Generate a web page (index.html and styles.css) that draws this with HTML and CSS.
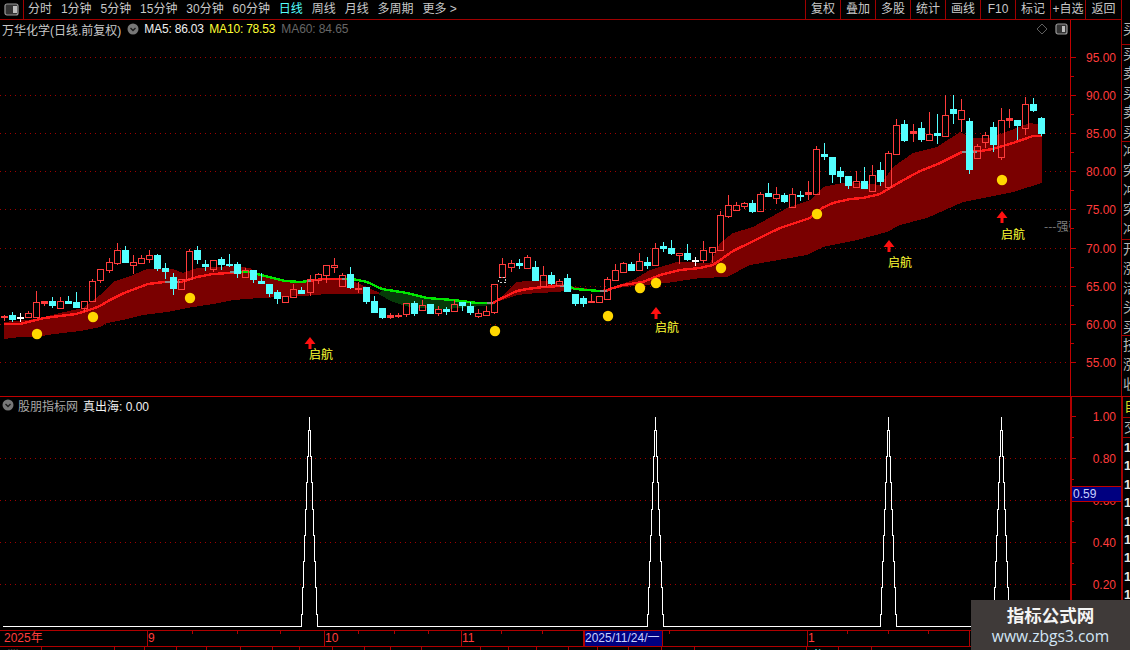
FILE: index.html
```html
<!DOCTYPE html>
<html lang="zh">
<head>
<meta charset="utf-8">
<title>万华化学</title>
<link rel="stylesheet" href="styles.css">
</head>
<body>
<div class="app">
  <header class="toolbar">
    <div class="layout-btn"><svg class="panel-icon" width="16" height="13" viewBox="0 0 16 13"><rect x="1" y="1" width="13" height="11" rx="2" class="pi-frame"/><rect x="9" y="3" width="4" height="7" class="pi-fill"/></svg></div>
    <nav class="periods">
      <span>分时</span><span>1分钟</span><span>5分钟</span><span>15分钟</span><span>30分钟</span><span>60分钟</span><span class="on">日线</span><span>周线</span><span>月线</span><span>多周期</span><span>更多 &gt;</span>
    </nav>
    <nav class="tools">
      <span>复权</span><span>叠加</span><span>多股</span><span>统计</span><span>画线</span><span>F10</span><span>标记</span><span>+自选</span><span>返回</span>
    </nav>
  </header>

  <main class="charts">
    <section class="pane pane-main">
      <div class="plot">
        <svg id="mainPlot" class="canvas" width="1070" height="376" viewBox="0 20 1070 376"></svg>
        <div class="legend legend-main">
          <span class="name">万华化学(日线.前复权)</span>
          <svg class="chev" width="12" height="12" viewBox="0 0 12 12"><circle cx="6" cy="6" r="5.5" class="chev-bg"/><path d="M3.5 5 L6 7.5 L8.5 5" class="chev-mark"/></svg>
          <span class="ma5">MA5: 86.03</span>
          <span class="ma10">MA10: 78.53</span>
          <span class="ma60">MA60: 84.65</span>
        </div>
        <div class="corner">
          <svg width="12" height="12" viewBox="0 0 12 12"><path d="M6 1 L11 6 L6 11 L1 6 Z" class="diamond"/></svg>
          <svg width="13" height="12" viewBox="0 0 13 12"><rect x="1" y="1" width="11" height="10" rx="2" class="pi-frame"/><rect x="7" y="3" width="3" height="6" class="pi-fill"/></svg>
        </div>
      </div>
      <svg id="mainAxis" class="axis" width="51" height="376" viewBox="1070 20 51 376"></svg>
      <div class="strip">
        <div class="group g1">买</div>
        <div class="group g2">买卖买卖买</div>
        <div class="group g3">冲突冲突冲</div>
        <div class="group g4">开涨活头买</div>
        <div class="group g5">技涨收</div>
      </div>
    </section>

    <section class="pane pane-sub">
      <div class="plot">
        <svg id="subPlot" class="canvas" width="1070" height="233" viewBox="0 397 1070 233"></svg>
        <div class="legend legend-sub">
          <svg class="chev" width="12" height="12" viewBox="0 0 12 12"><circle cx="6" cy="6" r="5.5" class="chev-bg"/><path d="M3.5 5 L6 7.5 L8.5 5" class="chev-mark"/></svg>
          <span class="name">股朋指标网</span>
          <span class="val">真出海: 0.00</span>
        </div>
      </div>
      <div class="axis-wrap">
        <svg id="subAxis" class="axis axis-sub" width="49" height="233" viewBox="1072 397 49 233"></svg>
        <div class="cursor-val">0.59</div>
      </div>
      <div class="strip">
        <div class="group g6">自</div>
        <div class="group g7">交</div>
        <div class="digits"><i>1</i><i>1</i><i>1</i><i>1</i><i>1</i><i>1</i><i>1</i><i>1</i><i>1</i><i>1</i></div>
      </div>
    </section>
  </main>

  <div id="dates" class="dates"></div>
  <div id="statusBar" class="status"></div>

  <aside class="watermark">
    <div class="wm-title">指标公式网</div>
    <div class="wm-url">www.zbgs3.com</div>
  </aside>
</div>
<script src="chart.js"></script>
</body>
</html>
```
FILE: styles.css
```css
* { box-sizing: border-box; }
html, body { margin: 0; padding: 0; background: #000; }
body { font-family: "Liberation Sans", "Noto Sans CJK SC", sans-serif; font-size: 12px; color: #c8c8c8; }
.app { position: relative; width: 1130px; height: 650px; overflow: hidden; background: #000; display: flex; flex-direction: column; }

.toolbar { display: flex; height: 20px; width: 1122px; border-bottom: 1px solid #a00000; flex: none; line-height: 19px; }
.layout-btn { width: 24px; border-right: 1px solid #a00000; display: flex; align-items: center; justify-content: center; }
.panel-icon { display: block; }
.pi-frame { fill: #333; stroke: #9a9a9a; stroke-width: 1.2; }
.pi-fill { fill: #bdbdbd; }
.periods { display: flex; gap: 8.9px; padding-left: 4px; flex: 1; white-space: nowrap; }
.periods .on { color: #54ffff; }
.tools { display: flex; }
.tools span { width: 35px; text-align: center; border-left: 1px solid #a00000; white-space: nowrap; }
.tools span:last-child { width: 37px; border-right: 1px solid #a00000; }

.charts { display: flex; flex-direction: column; flex: none; }
.pane { display: flex; width: 1130px; flex: none; }
.pane-main { height: 377px; border-bottom: 1px solid #c00000; }
.pane-sub { height: 233px; }
.plot { position: relative; width: 1070px; flex: none; overflow: hidden; }
.canvas { display: block; }
.axis { display: block; flex: none; }
.axis-wrap { position: relative; width: 51px; flex: none; border-left: 2px solid #b00000; }

.legend { position: absolute; top: 1px; left: 2px; display: flex; align-items: center; height: 16px; white-space: nowrap; }
.legend-main { top: 1px; }
.legend-main .chev { margin-left: 6px; }
.legend-main .ma5 { margin-left: 5px; color: #f0f0f0; width: 65px; letter-spacing: -0.2px; }
.legend-main .ma10 { color: #ffff33; width: 72px; letter-spacing: -0.2px; }
.legend-main .ma60 { color: #666; letter-spacing: -0.1px; }
.legend-sub { top: 0; left: 2px; }
.legend-sub .name { margin-left: 4px; color: #a8a8a8; }
.legend-sub .val { margin-left: 5px; color: #f0f0f0; }
.chev-bg { fill: #777; }
.chev-mark { fill: none; stroke: #1c1c1c; stroke-width: 1.4; }
.corner { position: absolute; top: 3px; right: 2px; display: flex; gap: 7px; align-items: center; }
.diamond { fill: none; stroke: #5e5e5e; }

.strip { width: 9px; flex: none; border-left: 1px solid #a00000; overflow: hidden; font-size: 14px; line-height: 19.4px; color: #b4b4b4; }
.pane-sub .strip { border-left-width: 2px; }
.group { width: 16px; border-bottom: 1px solid #a00000; overflow: hidden; padding-left: 1px; }
.g1 { height: 25px; }
.g2 { height: 97px; }
.g3 { height: 98px; }
.g4 { height: 96px; }
.g5 { height: 61px; border-bottom: 0; }
.g6 { height: 21px; color: #d8d820; }
.g7 { height: 20px; }
.digits { display: flex; flex-direction: column; padding-left: 1px; padding-top: 1px; }
.digits i { font-style: normal; font-weight: bold; font-size: 13px; line-height: 18.4px; color: #e6e6e6; }

.sv-grid { stroke: #a00000; stroke-width: 1; stroke-dasharray: 1 4; }
.band-red { fill: #7a0000; }
.band-green { fill: #063a08; }
.ma-red { fill: none; stroke: #ff1a1a; stroke-width: 2.4; }
.ma-green { fill: none; stroke: #00e600; stroke-width: 2.4; }
.ma-gray { stroke: #8a8a8a; stroke-width: 2; }
.crisp { shape-rendering: crispEdges; }
.candle-h { fill: none; stroke: #ff3c3c; }
.candle-r { fill: #ff3c3c; stroke: #ff3c3c; }
.candle-c { fill: #54ffff; stroke: #54ffff; }
.candle-w { fill: #fff; stroke: #fff; }
.dashed-box { fill: none; stroke: #d0d0d0; stroke-dasharray: 2 2; }
.dot { fill: #ffd700; }
.arrow { fill: #ff1010; }
.tag { fill: #ffff33; font-size: 12px; font-family: "Noto Sans CJK SC", sans-serif; }
.side-tag { fill: #7d7d7d; font-size: 12px; font-family: "Noto Sans CJK SC", sans-serif; }
.spike { fill: none; stroke: #fff; stroke-width: 1; }
.base { stroke: #fff; stroke-width: 1; }
.axis-line { stroke: #c00000; stroke-width: 1; }
.axis-tick { stroke: #c00000; stroke-width: 1; }
.axis-label { fill: #ff3c3c; font-size: 12px; text-anchor: end; font-family: "Liberation Sans", sans-serif; }

.cursor-val { position: absolute; left: 0; top: 89px; width: 49px; height: 16px; padding-left: 1px; background: #000080; border-top: 1px solid #c00000; border-bottom: 1px solid #c00000; color: #c8d0ff; line-height: 14px; }

.dates { position: relative; display: flex; width: 1070px; height: 17px; border-top: 1px solid #b00000; border-bottom: 1px solid #b00000; flex: none; color: #ff3c3c; line-height: 15px; white-space: nowrap; }
.dates .cell { flex: none; border-right: 1px solid #b00000; overflow: hidden; }
.dates .cell.first { padding-left: 4px; }
.dates .cell.cur { background: #000080; color: #c8d0ff; border-left: 1px solid #b00000; }
.dates .tick { position: absolute; top: 0; width: 1px; height: 3px; background: #b00000; }
.status { display: flex; height: 4px; overflow: hidden; flex: none; font-size: 14px; line-height: 18px; color: #e8e8e8; }
.status .cell { flex: none; border-right: 1px solid #b00000; overflow: hidden; white-space: nowrap; padding-left: 6px; }
.status .cyan { color: #54ffff; }

.watermark { position: absolute; left: 971px; top: 600px; width: 159px; height: 50px; background: #3f3a39; text-align: center; }
.wm-title { color: #f4f4f4; font: bold 17.5px/20px "Noto Sans CJK SC", sans-serif; margin-top: 5px; }
.wm-url { color: #d3e6f6; font: 15.6px/18px "Open Sans", sans-serif; margin-top: 2px; }
```
FILE: chart.js
```js
(function () {
var NS = 'http://www.w3.org/2000/svg';
function el(parent, name, attrs, text) {
  var n = document.createElementNS(NS, name);
  for (var k in attrs) n.setAttribute(k, attrs[k]);
  if (text !== undefined) n.textContent = text;
  parent.appendChild(n);
  return n;
}
function pts(a) { return a.map(function (p) { return p[0] + ',' + p[1]; }).join(' '); }

/* body top, body bottom, wick top, wick bottom, kind */
var candles = [
[316,317,315,321,'r'],[315,319,312,322,'c'],[317,318,313,322,'w'],[313,317,311,317,'h'],[302,317,291,317,'h'],[301,303,301,306,'r'],[301,305,297,308,'c'],[301,308,297,308,'h'],[301,303,296,304,'c'],[302,307,292,308,'c'],
[301,308,301,312,'h'],[281,301,279,301,'h'],[269,280,269,283,'h'],[262,270,258,273,'h'],[250,263,243,265,'h'],[250,262,246,262,'c'],[262,265,255,274,'h'],[258,263,255,263,'h'],[255,259,250,263,'h'],[255,268,254,271,'c'],
[268,271,263,279,'c'],[277,288,273,295,'c'],[279,289,279,289,'h'],[251,279,249,280,'h'],[250,259,246,264,'c'],[264,266,260,271,'c'],[260,269,260,272,'h'],[259,264,257,270,'c'],[264,265,254,267,'c'],[264,273,262,278,'c'],
[270,277,268,277,'h'],[270,279,270,283,'c'],[281,283,273,283,'c'],[284,293,284,297,'c'],[292,298,290,304,'c'],[296,302,296,302,'h'],[289,297,284,297,'h'],[290,293,287,294,'c'],[279,292,275,296,'h'],[274,280,273,284,'h'],
[265,275,265,283,'h'],[265,267,258,273,'h'],[275,286,273,286,'h'],[274,287,267,289,'c'],[288,289,282,293,'r'],[287,301,287,304,'c'],[301,312,296,312,'c'],[308,317,308,319,'c'],[315,317,313,319,'r'],[315,316,313,318,'r'],
[303,314,303,317,'h'],[303,313,301,316,'c'],[305,310,300,310,'h'],[304,313,304,313,'c'],[309,313,306,316,'h'],[309,311,307,315,'c'],[304,311,300,311,'h'],[302,305,302,311,'c'],[306,312,302,315,'c'],[313,316,309,318,'h'],
[311,315,306,315,'h'],[284,312,284,314,'h'],[264,277,258,277,'h'],[263,267,260,272,'h'],[263,265,259,269,'c'],[257,268,255,268,'h'],[267,280,261,280,'c'],[275,286,266,286,'h'],[275,283,272,285,'c'],[281,285,279,285,'h'],
[278,291,274,292,'c'],[294,303,294,306,'c'],[298,303,296,307,'c'],[301,302,294,302,'r'],[296,302,296,302,'h'],[279,299,277,299,'h'],[270,280,264,280,'h'],[263,272,262,273,'h'],[264,270,262,271,'c'],[261,270,253,270,'h'],
[262,265,257,269,'c'],[248,265,243,265,'h'],[246,248,242,252,'c'],[248,253,240,255,'c'],[253,255,253,264,'h'],[253,259,244,261,'c'],[260,261,257,266,'w'],[250,260,241,263,'h'],[247,252,247,263,'h'],[215,250,211,250,'h'],
[205,216,195,218,'h'],[205,210,202,210,'h'],[203,206,202,209,'h'],[203,211,200,213,'c'],[194,211,192,211,'h'],[193,196,183,197,'c'],[194,198,187,204,'h'],[195,201,193,203,'c'],[194,207,188,208,'h'],[195,196,191,201,'c'],
[192,194,181,200,'r'],[149,194,146,194,'h'],[154,156,143,160,'c'],[157,174,157,183,'c'],[171,176,167,183,'c'],[176,185,176,189,'c'],[181,187,171,188,'h'],[181,188,167,188,'c'],[175,191,165,192,'h'],[170,181,162,186,'c'],
[153,187,151,190,'h'],[125,154,119,155,'h'],[124,140,120,142,'c'],[131,133,124,142,'r'],[128,139,122,142,'c'],[134,140,112,140,'h'],[133,135,114,144,'c'],[115,136,95,136,'h'],[109,113,95,124,'c'],[110,119,99,132,'h'],
[121,169,118,174,'c'],[146,158,144,159,'h'],[135,142,132,148,'h'],[127,144,122,152,'c'],[120,157,108,160,'h'],[118,120,109,128,'r'],[120,125,120,140,'c'],[104,128,97,135,'h'],[104,110,98,112,'c'],[118,133,117,136,'c']
];

var upper = [[4,322],[36,319],[60,313],[83,308],[100,295],[113,282],[133,275],[147,269],[173,269],[183,273],[197,268],[233,266],[250,268],[262,276],[285,282],[301,283],[327,279],[345,279],[360,284],[380,293],[490,303],[500,298],[517,282],[537,280],[560,283],[575,287],[600,290],[610,288],[633,280],[650,270],[677,262],[710,263],[720,243],[733,233],[753,227],[787,208],[810,200],[823,187],[847,182],[880,185],[893,167],[913,153],[937,147],[960,132],[973,138],[990,138],[1030,123],[1042,125]];
var lower = [[4,339],[20,337],[37,337],[47,335],[63,333],[80,331],[100,327],[107,323],[123,320],[143,315],[167,312],[187,308],[213,304],[233,300],[260,298],[303,296],[327,294],[373,294],[380,294],[490,304],[500,301],[517,295],[537,293],[558,292],[575,289],[600,292],[610,289],[633,286],[667,283],[700,278],[727,277],[750,265],[807,255],[823,247],[857,240],[887,232],[900,225],[927,218],[963,202],[1013,192],[1042,183]];
var greenBand = [[382,290],[407,294],[427,298],[453,301],[477,304],[493,304],[493,305],[447,309],[413,308],[393,302],[378,294]];

var redLines = [
  [[4,324],[20,324],[28,322],[44,318],[60,316],[76,314],[92,309],[100,306],[108,301],[124,293],[140,287],[148,284],[164,282],[181,282],[197,277],[213,274],[229,273],[240,272]],
  [[306,281],[325,279],[346,279]],
  [[493,303],[500,299],[517,291],[527,289],[543,287],[560,286],[566,286]],
  [[606,291],[610,289],[623,285],[643,282],[660,275],[680,270],[700,268],[713,265],[733,251],[780,228],[810,218],[822,208],[833,203],[850,199],[863,198],[880,194],[900,182],[920,171],[938,164],[962,152],[980,151],[993,149],[1013,143],[1033,136],[1042,136]]
];
var greenLines = [
  [[238,272],[250,272],[261,275],[285,281],[301,282],[308,281]],
  [[344,279],[353,279],[367,282],[382,289],[407,293],[427,298],[453,300],[477,303],[492,303]],
  [[564,286],[570,287],[575,289],[600,291],[607,291]]
];
var grayMarks = [[165,180,282],[230,240,272],[307,311,281],[342,346,279],[487,493,303],[560,565,286],[600,607,291],[962,977,152]];

var dots = [[37,334],[93,317],[190,298],[495,331],[608,316],[640,288],[656,283],[721,268],[817,214],[1002,180]];
/* arrow x, arrow tip y, label baseline y */
var signals = [[310,337,359],[656,307,332],[889,240,267],[1002,211,239]];

function gridY(i) { return Math.floor(57 + i * 38.2) + 0.5; }

var main = document.getElementById('mainPlot');
for (var g = 0; g < 9; g++) {
  el(main, 'line', { x1: 0, x2: 1070, y1: gridY(g), y2: gridY(g), 'class': 'sv-grid crisp' });
}
el(main, 'polygon', { points: pts(upper.concat(lower.slice().reverse())), 'class': 'band-red crisp' });
el(main, 'polygon', { points: pts(greenBand), 'class': 'band-green crisp' });
redLines.forEach(function (l) { el(main, 'polyline', { points: pts(l), 'class': 'ma-red crisp' }); });
greenLines.forEach(function (l) { el(main, 'polyline', { points: pts(l), 'class': 'ma-green crisp' }); });
grayMarks.forEach(function (m) { el(main, 'line', { x1: m[0], x2: m[1], y1: m[2], y2: m[2], 'class': 'ma-gray crisp' }); });

candles.forEach(function (c, i) {
  var x = Math.floor(4.5 + 8.04 * i);
  var kind = 'candle-' + c[4];
  var cx = x + 0.5;
  if (c[2] < c[0]) el(main, 'line', { x1: cx, x2: cx, y1: c[2], y2: c[0], 'class': kind + ' crisp' });
  if (c[3] > c[1]) el(main, 'line', { x1: cx, x2: cx, y1: c[1], y2: c[3], 'class': kind + ' crisp' });
  el(main, 'rect', { x: x - 3 + 0.5, y: c[0] + 0.5, width: 6, height: Math.max(c[1] - c[0], 1), 'class': kind + ' crisp' });
});
el(main, 'rect', { x: 498.5, y: 277.5, width: 7, height: 5, 'class': 'dashed-box crisp' });

dots.forEach(function (d) { el(main, 'circle', { cx: d[0], cy: d[1], r: 5.2, 'class': 'dot' }); });
signals.forEach(function (s) {
  var x = s[0], y = s[1];
  el(main, 'path', { d: 'M' + x + ' ' + y + ' L' + (x + 5.5) + ' ' + (y + 7) + ' H' + (x + 1.5) + ' V' + (y + 12) + ' H' + (x - 1.5) + ' V' + (y + 7) + ' H' + (x - 5.5) + ' Z', 'class': 'arrow' });
  el(main, 'text', { x: x - 1, y: s[2], 'class': 'tag' }, '启航');
});
el(main, 'text', { x: 1044, y: 231, 'class': 'side-tag' }, '---强强');

var mainAxis = document.getElementById('mainAxis');
el(mainAxis, 'line', { x1: 1070.5, x2: 1070.5, y1: 20, y2: 396, 'class': 'axis-line crisp' });
['95.00', '90.00', '85.00', '80.00', '75.00', '70.00', '65.00', '60.00', '55.00'].forEach(function (t, i) {
  var y = gridY(i);
  el(mainAxis, 'line', { x1: 1071, x2: 1076, y1: y, y2: y, 'class': 'axis-tick crisp' });
  var my = gridY(i + 0.5);
  if (i < 8) el(mainAxis, 'line', { x1: 1071, x2: 1074, y1: my, y2: my, 'class': 'axis-tick crisp' });
  el(mainAxis, 'text', { x: 1116, y: y + 4.5, 'class': 'axis-label' }, t);
});

var sub = document.getElementById('subPlot');
[458, 500, 542, 584].forEach(function (y) {
  el(sub, 'line', { x1: 0, x2: 1070, y1: y + 0.5, y2: y + 0.5, 'class': 'sv-grid crisp' });
});
var baseY = 626.5, prev = 3;
[309, 655, 888, 1001].forEach(function (sx) {
  var line = [[prev, baseY]];
  var cx = sx + 0.5, k;
  line.push([cx - 8, baseY]);
  for (k = 0; k < 8; k++) {
    var top = Math.round(baseY - 13 - 26.25 * k) + 0.5;
    line.push([cx - 8 + k, top]);
    line.push([cx - 7 + k, top]);
  }
  line.push([cx, 416.5]);
  for (k = 7; k >= 0; k--) {
    var t2 = Math.round(baseY - 13 - 26.25 * k) + 0.5;
    line.push([cx + 7 - k, t2]);
    line.push([cx + 8 - k, t2]);
  }
  line.push([cx + 8, baseY]);
  el(sub, 'polyline', { points: pts(line), 'class': 'spike crisp' });
  prev = cx + 8;
});
el(sub, 'line', { x1: prev, x2: 1069, y1: baseY, y2: baseY, 'class': 'base crisp' });

var subAxis = document.getElementById('subAxis');
[['1.00', 416], ['0.80', 458], ['0.60', 500], ['0.40', 542], ['0.20', 584]].forEach(function (p) {
  var y = p[1] + 0.5;
  el(subAxis, 'line', { x1: 1072, x2: 1076, y1: y, y2: y, 'class': 'axis-tick crisp' });
  el(subAxis, 'line', { x1: 1072, x2: 1074, y1: y + 21, y2: y + 21, 'class': 'axis-tick crisp' });
  el(subAxis, 'text', { x: 1116, y: y + 4, 'class': 'axis-label' }, p[0]);
});

function cellsInto(host, list) {
  list.forEach(function (c) {
    var d = document.createElement('div');
    d.className = 'cell' + (c[2] ? ' ' + c[2] : '');
    d.style.width = c[0] + 'px';
    d.textContent = c[1];
    host.appendChild(d);
  });
}
var dates = document.getElementById('dates');
cellsInto(dates, [[148, '2025年', 'first'], [177, '9'], [137, '10'], [122, '11'], [79, '2025/11/24/一', 'cur'], [145, ''], [162, '1'], [100, '']]);
[192, 237, 280, 358, 394, 428, 501, 542, 669, 847, 888, 928].forEach(function (x) {
  var t = document.createElement('div');
  t.className = 'tick';
  t.style.left = x + 'px';
  dates.appendChild(t);
});

var statusBar = document.getElementById('statusBar');
var stops = [42, 115, 145, 177, 207, 241, 273, 300, 333, 365, 391, 422, 481, 509, 537, 569, 598, 629, 662, 695, 807, 839, 872, 972];
var last = 0, cells = [];
stops.forEach(function (x, i) {
  var text = i === 0 ? '卌' : (i === 1 ? '.' : (i === 21 ? '指' : ''));
  cells.push([x - last, text, i === 21 ? 'cyan' : '']);
  last = x;
});
cellsInto(statusBar, cells);
})();
```
